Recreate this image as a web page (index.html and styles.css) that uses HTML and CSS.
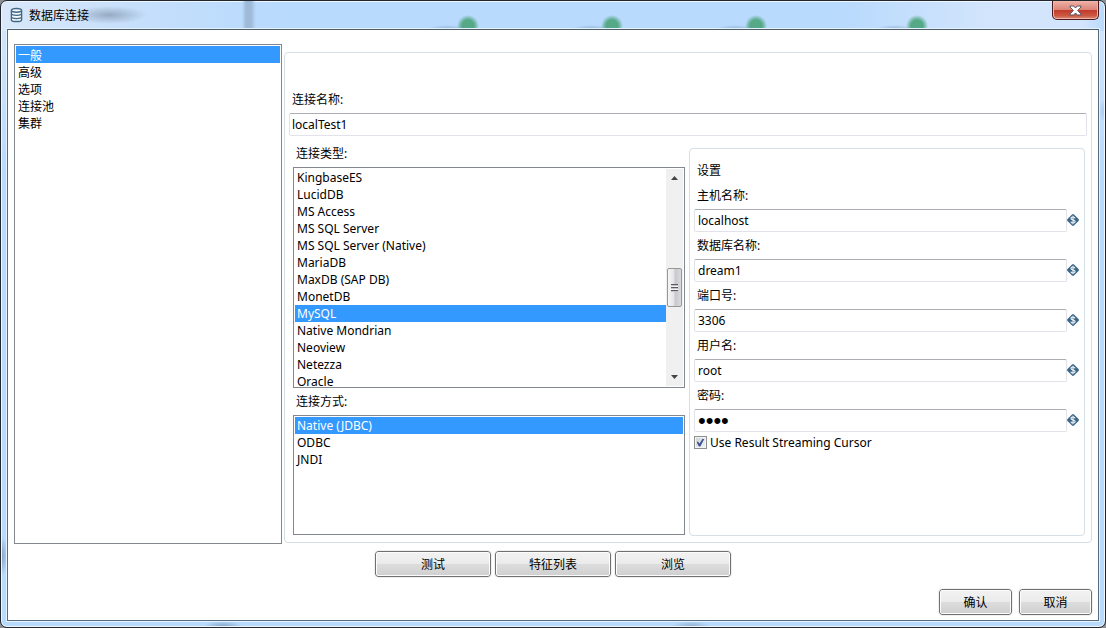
FILE: index.html
```html
<!DOCTYPE html>
<html lang="zh-CN">
<head>
<meta charset="utf-8">
<meta name="viewport" content="width=device-width, initial-scale=1">
<title>数据库连接</title>
<link rel="stylesheet" href="styles.css">
</head>
<body>
<svg class="sprite" aria-hidden="true">
  <symbol id="var" viewBox="0 0 12 12">
    <path d="M5 .5Q6-.4 7 .5L11.500 5Q12.400 6 11.500 7L7 11.500Q6 12.400 5 11.500L.5 7Q-.4 6 .5 5Z" fill="#3c6686"/>
    <path d="M8 4.300C7.800 3.400 7 3 6 3C4.800 3 4 3.500 4 4.400C4 6.300 8.100 5.400 8.100 7.500C8.100 8.500 7.200 9 6 9C4.800 9 4 8.500 3.900 7.600M6 1.800V10.200" fill="none" stroke="#e6eef4" stroke-width="1.200"/>
  </symbol>
</svg>
<div class="window">
  <header class="titlebar">
    <svg class="app-icon" viewBox="0 0 14 16" aria-hidden="true">
      <g fill="#f4f9fd" stroke="#3f6885" stroke-width="1.500">
        <path d="M1.500 10.500V13C1.500 15.700 12.500 15.700 12.500 13V10.500"/>
        <path d="M1.500 7V10C1.500 12.500 12.500 12.500 12.500 10V7"/>
        <path d="M1.500 3.500V6.500C1.500 9 12.500 9 12.500 6.500V3.500"/>
        <ellipse cx="7" cy="3" rx="5.500" ry="2"/>
      </g>
    </svg>
    <h1 class="title">数据库连接</h1>
    <button class="close" type="button" aria-label="关闭">
      <svg viewBox="0 0 13 11" aria-hidden="true">
        <path d="M1 1H4.700L6.500 3L8.300 1H12V2L8.700 5.500L12 9V10H8.300L6.500 8L4.700 10H1V9L4.300 5.500L1 2Z" fill="#fff" stroke="#5a5460"/>
      </svg>
    </button>
  </header>
  <main class="client">
    <div class="content">
      <select class="list nav" size="5" aria-label="分类">
        <option selected>一般</option>
        <option>高级</option>
        <option>选项</option>
        <option>连接池</option>
        <option>集群</option>
      </select>
      <section class="group general">
        <label class="name-label" for="name">连接名称:</label>
        <input class="text" id="name" type="text" value="localTest1">
        <div class="columns">
          <div class="types">
            <label for="type">连接类型:</label>
            <div class="scroll-list">
              <select class="list" id="type" size="13">
                <option>KingbaseES</option>
                <option>LucidDB</option>
                <option>MS Access</option>
                <option>MS SQL Server</option>
                <option>MS SQL Server (Native)</option>
                <option>MariaDB</option>
                <option>MaxDB (SAP DB)</option>
                <option>MonetDB</option>
                <option selected>MySQL</option>
                <option>Native Mondrian</option>
                <option>Neoview</option>
                <option>Netezza</option>
                <option>Oracle</option>
              </select>
              <div class="scrollbar" aria-hidden="true">
                <svg class="arrow" viewBox="0 0 7 4"><path d="M0 4L3.500 0L7 4Z" fill="#444"/></svg>
                <div class="thumb"><i></i></div>
                <svg class="arrow" viewBox="0 0 7 4"><path d="M0 0L3.500 4L7 0Z" fill="#444"/></svg>
              </div>
            </div>
            <label for="access">连接方式:</label>
            <select class="list access" id="access" size="3">
              <option selected>Native (JDBC)</option>
              <option>ODBC</option>
              <option>JNDI</option>
            </select>
          </div>
          <section class="group settings">
            <h2 class="heading">设置</h2>
            <label for="host">主机名称:</label>
            <div class="field"><input class="text" id="host" type="text" value="localhost"><svg class="var" aria-hidden="true"><use href="#var"/></svg></div>
            <label for="db">数据库名称:</label>
            <div class="field"><input class="text" id="db" type="text" value="dream1"><svg class="var" aria-hidden="true"><use href="#var"/></svg></div>
            <label for="port">端口号:</label>
            <div class="field"><input class="text" id="port" type="text" value="3306"><svg class="var" aria-hidden="true"><use href="#var"/></svg></div>
            <label for="user">用户名:</label>
            <div class="field"><input class="text" id="user" type="text" value="root"><svg class="var" aria-hidden="true"><use href="#var"/></svg></div>
            <label for="pass">密码:</label>
            <div class="field"><input class="text password" id="pass" type="password" value="root"><svg class="var" aria-hidden="true"><use href="#var"/></svg></div>
            <label class="check"><input type="checkbox" checked>Use Result Streaming Cursor</label>
          </section>
        </div>
      </section>
    </div>
    <div class="actions">
      <button class="btn wide" type="button">测试</button>
      <button class="btn wide" type="button">特征列表</button>
      <button class="btn wide" type="button">浏览</button>
    </div>
    <footer class="confirm">
      <button class="btn" type="button">确认</button>
      <button class="btn" type="button">取消</button>
    </footer>
  </main>
</div>
</body>
</html>
```
FILE: styles.css
```css
* { box-sizing: border-box; }

body {
  margin: 0;
  background: #8b8f94;
  color: #000;
}

body, button, input, select {
  font-family: "Noto Sans", "Noto Sans CJK SC", sans-serif;
  font-size: 12px;
  line-height: 17px;
}

.sprite { position: absolute; width: 0; height: 0; }

.window {
  display: flex;
  flex-direction: column;
  min-height: 100vh;
  padding: 0 6px 6px;
  border: 1px solid #22262e;
  border-radius: 7px;
  box-shadow: inset 0 0 0 1px #eef7ff;
  background:
    radial-gradient(ellipse 7px 12px at 100% 110px, #a9c6ea, transparent),
    radial-gradient(ellipse 7px 20px at 0 555px, #7f9fc4, transparent),
    radial-gradient(ellipse 20px 6px at 222px 100%, #7f9fbe, transparent),
    radial-gradient(ellipse 20px 6px at 690px 100%, #8fabc8, transparent),
    linear-gradient(90deg, #d9e8fa 0, #c6dffb 130px, #b8dafd 280px, #b8dafd 76%, #d3e5fc 90%, #d3e5fc 98%, #b8dafd 100%) 0 0 / 100% 30px no-repeat,
    linear-gradient(#d5e6fb, #b8dafd 180px);
}

.titlebar {
  display: flex;
  align-items: center;
  height: 28px;
  padding-left: 3px;
  background:
    radial-gradient(ellipse 38px 9px at 102px 14px, #74879d99, transparent),
    linear-gradient(90deg, transparent, #9fbad8 4px, #9fbad8 9px, transparent) 235px 0 / 14px 100% no-repeat,
    radial-gradient(circle at 461px 25px, #55a987 6px, transparent 11px),
    radial-gradient(circle at 605px 25px, #55a987 6px, transparent 11px),
    radial-gradient(circle at 749px 25px, #55a987 6px, transparent 11px),
    radial-gradient(circle at 910px 25px, #55a987 6px, transparent 11px),
    radial-gradient(ellipse 20px 4px at 440px 100%, #94b2d4, transparent),
    radial-gradient(ellipse 20px 4px at 584px 100%, #94b2d4, transparent),
    radial-gradient(ellipse 20px 4px at 728px 100%, #94b2d4, transparent),
    radial-gradient(ellipse 20px 4px at 888px 100%, #94b2d4, transparent);
}

.app-icon { width: 13px; height: 16px; margin-right: 6px; }

.title { margin: 0; font-size: 12px; font-weight: 400; }

.close {
  display: grid;
  place-items: center;
  align-self: flex-start;
  width: 47px;
  height: 19px;
  margin-left: auto;
  padding: 0;
  border: 1px solid #4a1a1c;
  border-top: 0;
  border-radius: 0 0 5px 5px;
  box-shadow: inset 0 0 0 1px #f1b4a9;
  background: linear-gradient(#efb1a8, #dc8578 48%, #c0392a 50%, #cc5640 80%, #dd8b75);
}

.close svg { width: 13px; height: 11px; }

.client {
  display: flex;
  flex: 1;
  flex-direction: column;
  padding: 14px 6px 5px;
  border: 1px solid #566a80;
  border-top-color: #4e5c66;
  outline: 1px solid #e5f2ff;
  background: #fff;
}

.content { display: flex; flex: 1; gap: 2px; }

.list {
  display: block;
  width: 100%;
  margin: 0;
  padding: 1px;
  overflow: hidden;
  border: 1px solid #828790;
  border-radius: 0;
  outline: 0;
  background: #fff;
  color: #000;
}

.list option {
  height: 17px;
  min-height: 17px;
  padding: 0 2px;
  overflow: hidden;
  font-size: 12px;
  line-height: 17px;
}

.list option:checked {
  background: #3399ff linear-gradient(#3399ff, #3399ff);
  color: #fff;
  -webkit-text-fill-color: #fff;
}

.nav { flex: 0 0 268px; height: auto; }

.group { border: 1px solid #d5dfe8; border-radius: 4px; }

.general {
  display: flex;
  flex: 1;
  flex-direction: column;
  min-width: 0;
  margin: 8px 0 1px;
  padding: 38px 4px 6px;
}

.name-label { padding: 0 3px; margin-bottom: 5px; }

.text {
  width: 100%;
  height: 23px;
  padding: 0 2px;
  border: 1px solid #e2e3ea;
  border-top-color: #abadb3;
  border-radius: 2px;
  outline: 0;
  background: #fff;
}

.columns {
  display: grid;
  flex: 1;
  grid-template-columns: 1fr 1fr;
  gap: 4px;
  margin-top: 12px;
  padding-right: 2px;
}

.types {
  display: flex;
  flex-direction: column;
  min-width: 0;
  padding-left: 4px;
}

.types label { padding: 0 3px; margin: -3px 0 5px; }

.scroll-list {
  display: flex;
  height: 221px;
  margin-bottom: 8px;
  border: 1px solid #828790;
}

.scroll-list .list { flex: 1; width: 0; height: 219px; border: 0; padding-right: 0; }

.scrollbar {
  display: flex;
  flex-direction: column;
  align-items: center;
  width: 17px;
  margin: 1px 1px 1px 0;
  padding: 7px 0;
  background: #f0f0f0;
}

.arrow { width: 7px; height: 4px; }

.thumb {
  display: grid;
  place-items: center;
  width: 15px;
  height: 39px;
  margin: 88px 0 auto;
  border: 1px solid #979797;
  border-radius: 2px;
  background: linear-gradient(90deg, #f7f7f7, #e4e4e6 45%, #c8c8cc 55%, #dadade);
}

.thumb i {
  width: 7px;
  height: 8px;
  background: repeating-linear-gradient(#5c5c60 0 1px, #c4c4c8 1px 2px, #f4f4f4 2px 3px);
}

.types .access { flex: 1; height: 0; margin-bottom: 1px; }

.settings {
  display: flex;
  flex-direction: column;
  min-width: 0;
  padding: 13px 5px 8px 4px;
}

.heading { margin: 0 0 8px; padding: 0 3px; font-size: 12px; font-weight: 400; }

.settings label { padding: 0 3px; margin-bottom: 5px; }

.field { display: flex; align-items: center; margin-bottom: 5px; }
.field .text { flex: 1; min-width: 0; padding: 0 3px; }
.field .password { font-family: "Liberation Sans", sans-serif; font-size: 22px; }

.var { flex: none; width: 12px; height: 12px; margin-bottom: 1px; }

.settings .check {
  display: flex;
  align-items: center;
  gap: 3px;
  padding: 0;
  margin: -3px 0 0;
}

.check input {
  display: grid;
  place-items: center;
  width: 13px;
  height: 13px;
  margin: 0;
  appearance: none;
  border: 1px solid #8e8f8f;
  box-shadow: inset 0 0 0 1px #f4f4f4;
  background: linear-gradient(135deg, #cbcfd5, #f6f6f6);
}

.check input:checked::before {
  content: "";
  width: 8px;
  height: 8px;
  background: #3f5593;
  clip-path: polygon(0 45%, 18% 38%, 38% 62%, 78% 0, 100% 0, 48% 100%, 30% 100%);
}

.actions { display: flex; justify-content: center; gap: 4px; margin-top: 7px; }

.confirm { display: flex; justify-content: flex-end; gap: 7px; margin-top: 12px; }

.btn {
  width: 73px;
  height: 26px;
  padding: 0;
  border: 1px solid #707070;
  border-radius: 3px;
  outline: 1px solid #f0f0f0;
  box-shadow: inset 0 0 0 1px #fcfcfc;
  background: linear-gradient(#f2f2f2, #ebebeb 49%, #dddddd 50%, #cfcfcf);
  color: #000;
}

.wide { width: 116px; }
```
